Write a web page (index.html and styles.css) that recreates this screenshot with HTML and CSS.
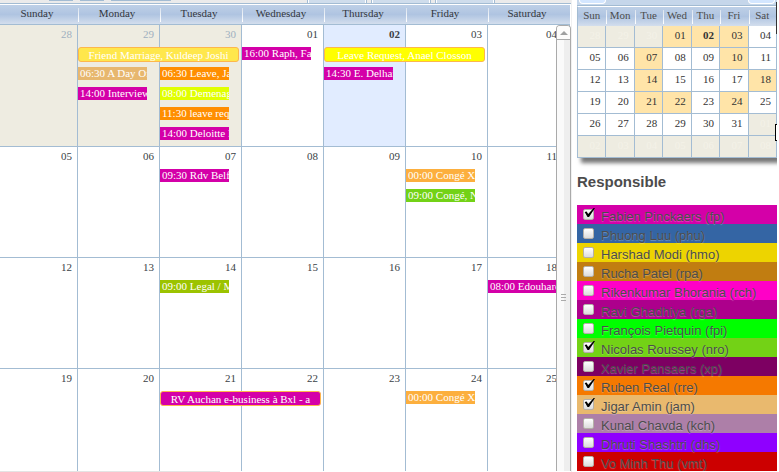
FILE: index.html
```html
<!DOCTYPE html>
<html lang="en">
<head>
<meta charset="utf-8">
<title>Calendar</title>
<link rel="stylesheet" href="styles.css">
</head>
<body>
<main class="calendar">
  <div class="toolbar">
    <span class="tool tool-first"></span><span class="tool"></span><span class="tool tool-wide"></span>
    <span class="tab tab-first"></span><span class="tab"></span><span class="tab"></span>
  </div>
  <div class="weekdays">
    <div>Sunday</div><div>Monday</div><div>Tuesday</div><div>Wednesday</div><div>Thursday</div><div>Friday</div><div>Saturday</div>
  </div>
  <div class="month">
    <section class="week week-first">
      <div class="day c1 other">28</div><div class="day c2 other">29</div><div class="day c3 other">30</div><div class="day c4">01</div><div class="day c5 today">02</div><div class="day c6">03</div><div class="day c7">04</div>
      <div class="allday c2 r1 lemon">Friend Marriage, Kuldeep Joshi</div>
      <div class="event c2 r2 tan">06:30 A Day Off</div>
      <div class="event c2 r3 magenta">14:00 Interview</div>
      <div class="event c3 r2 orange">06:30 Leave, Jay</div>
      <div class="event c3 r3 lime">08:00 Demenagement</div>
      <div class="event c3 r4 orange">11:30 leave request</div>
      <div class="event c3 r5 magenta">14:00 Deloitte B</div>
      <div class="event c4 r1 magenta">16:00 Raph, Fabien</div>
      <div class="allday c5 r1 yellow">Leave Request, Anael Closson</div>
      <div class="event c5 r2 magenta">14:30 E. Delhaize</div>
    </section>
    <section class="week">
      <div class="day c1">05</div><div class="day c2">06</div><div class="day c3">07</div><div class="day c4">08</div><div class="day c5">09</div><div class="day c6">10</div><div class="day c7">11</div>
      <div class="event c3 r1 magenta">09:30 Rdv Belfius</div>
      <div class="event c6 r1 apricot">00:00 Congé XAP</div>
      <div class="event c6 r2 green">09:00 Congé, Nicolas</div>
    </section>
    <section class="week">
      <div class="day c1">12</div><div class="day c2">13</div><div class="day c3">14</div><div class="day c4">15</div><div class="day c5">16</div><div class="day c6">17</div><div class="day c7">18</div>
      <div class="event c3 r1 olive">09:00 Legal / Meeting</div>
      <div class="event c7 r1 magenta">08:00 Edouhard</div>
    </section>
    <section class="week">
      <div class="day c1">19</div><div class="day c2">20</div><div class="day c3">21</div><div class="day c4">22</div><div class="day c5">23</div><div class="day c6">24</div><div class="day c7">25</div>
      <div class="allday c3 r1 magenta">RV Auchan e-business à Bxl - a</div>
      <div class="event c6 r1 apricot">00:00 Congé XAP</div>
    </section>
    <div class="scrollbar">
      <button class="scroll-up" aria-label="Scroll up"><svg width="8" height="4" viewBox="0 0 8 4"><path d="M0 4L4 0L8 4Z" fill="#a0a0a0"/></svg></button>
      <div class="track"><span class="grip"></span></div>
    </div>
  </div>
  <div class="status"></div>
</main>
<aside class="side">
  <div class="mini-box">
    <div class="mini-nav"><button aria-label="Previous month"></button><button aria-label="Next month"></button></div>
    <table class="mini">
      <thead><tr><th>Sun</th><th>Mon</th><th>Tue</th><th>Wed</th><th>Thu</th><th>Fri</th><th>Sat</th></tr></thead>
      <tbody>
        <tr><td class="out">28</td><td class="out">29</td><td class="out">30</td><td class="busy">01</td><td class="busy now">02</td><td class="busy">03</td><td>04</td></tr>
        <tr><td>05</td><td>06</td><td class="busy">07</td><td>08</td><td>09</td><td class="busy">10</td><td>11</td></tr>
        <tr><td>12</td><td>13</td><td class="busy">14</td><td>15</td><td>16</td><td>17</td><td class="busy">18</td></tr>
        <tr><td>19</td><td>20</td><td class="busy">21</td><td class="busy">22</td><td>23</td><td class="busy">24</td><td>25</td></tr>
        <tr><td>26</td><td>27</td><td>28</td><td>29</td><td>30</td><td>31</td><td class="out">01</td></tr>
        <tr><td class="out">02</td><td class="out">03</td><td class="out">04</td><td class="out">05</td><td class="out">06</td><td class="out">07</td><td class="out">08</td></tr>
      </tbody>
    </table>
    <span class="edge"></span><span class="bracket"></span>
  </div>
  <h2>Responsible</h2>
  <div class="people">
    <label class="p-fp"><input type="checkbox" checked><span>Fabien Pinckaers (fp)</span></label>
    <label class="p-phu"><input type="checkbox"><span>Phuong Luu (phu)</span></label>
    <label class="p-hmo"><input type="checkbox"><span>Harshad Modi (hmo)</span></label>
    <label class="p-rpa"><input type="checkbox"><span>Rucha Patel (rpa)</span></label>
    <label class="p-rch"><input type="checkbox"><span>Rikenkumar Bhorania (rch)</span></label>
    <label class="p-rga"><input type="checkbox"><span>Ravi Ghadhiya (rga)</span></label>
    <label class="p-fpi"><input type="checkbox"><span>François Pietquin (fpi)</span></label>
    <label class="p-nro"><input type="checkbox" checked><span>Nicolas Roussey (nro)</span></label>
    <label class="p-xp"><input type="checkbox"><span>Xavier Pansaers (xp)</span></label>
    <label class="p-rre"><input type="checkbox" checked><span>Ruben Real (rre)</span></label>
    <label class="p-jam"><input type="checkbox" checked><span>Jigar Amin (jam)</span></label>
    <label class="p-kch"><input type="checkbox"><span>Kunal Chavda (kch)</span></label>
    <label class="p-dhs"><input type="checkbox"><span>Dhruti Shashtri (dhs)</span></label>
    <label class="p-vmt"><input type="checkbox"><span>Vo Minh Thu (vmt)</span></label>
  </div>
</aside>
</body>
</html>
```
FILE: styles.css
```css
* { box-sizing: border-box; }
body {
  margin: 0;
  padding-right: 2px;
  height: 100vh;
  display: flex;
  overflow: hidden;
  background: #fff;
  color: #4c4c4c;
  font: 11px/13px "Liberation Serif", serif;
}
.calendar {
  flex: 1;
  min-width: 0;
  display: flex;
  flex-direction: column;
  border-right: 1px solid #f0f0f0;
}
.toolbar {
  flex: none;
  display: flex;
  height: 4px;
  background: #ebebeb;
  border-bottom: 1px solid #a3bcd3;
}
.tool { width: 24px; height: 1px; margin-right: 7px; background: #a3bcd3; }
.tool-first { margin-left: 49px; }
.tool-wide { width: 60px; }
.tab {
  width: 60px;
  margin-right: 4px;
  background: #cfddec;
  border: solid #a3bcd3;
  border-width: 0 1px;
  box-shadow: inset 1px 0 #fff, inset -1px 0 #fff;
}
.tab-first { margin-left: 129px; }
.weekdays {
  flex: none;
  display: grid;
  grid-template-columns: 78fr repeat(6, 82fr);
  margin-right: 1px;
  border-top: 1px solid #fff;
  border-bottom: 1px solid #a3bcd3;
  background: linear-gradient(#bed0e7, #afc4e1 50%, #d3deed);
  text-align: center;
  color: #33373d;
}
.weekdays div { height: 19px; padding-right: 4px; line-height: 17px; }
.weekdays div + div { background: linear-gradient(#dbe4ef, #fff) 0 3px / 1px 14px no-repeat; }
.month { flex: 1; min-height: 0; position: relative; overflow: hidden; }
.week {
  display: grid;
  grid-template-columns: 78fr repeat(6, 82fr);
  grid-template-rows: 22px repeat(4, 20px) 1fr;
  height: 111px;
  margin-right: 1px;
  border-bottom: 1px solid #a3bcd3;
}
.week-first { height: 122px; }
.day {
  grid-row: 1 / -1;
  padding: 3px 5px 0 0;
  border-right: 1px solid #a3bcd3;
  text-align: right;
  color: #3a3f46;
}
.day.c7 { padding-right: 12px; }
.day.other { background: #eeece1; color: #9fb0c0; }
.today { background: #e1ecff; font-weight: bold; }
.event, .allday {
  align-self: start;
  overflow: hidden;
  white-space: nowrap;
  color: #fff;
}
.event { height: 13px; margin-right: 13px; padding-left: 2px; line-height: 13px; }
.allday {
  height: 15px;
  margin-right: 3px;
  border: 1px solid #fdb74c;
  border-radius: 3px;
  line-height: 14px;
  text-align: center;
}
.c1 { grid-column: 1; } .c2 { grid-column: 2; } .c3 { grid-column: 3; } .c4 { grid-column: 4; }
.c5 { grid-column: 5; } .c6 { grid-column: 6; } .c7 { grid-column: 7; }
.allday { grid-column-end: span 2; }
.r1 { grid-row: 2; } .r2 { grid-row: 3; } .r3 { grid-row: 4; } .r4 { grid-row: 5; } .r5 { grid-row: 6; }
.lemon { background: #ffe74c; }
.yellow { background: #ff0; }
.tan { background: #e7b76e; }
.magenta { background: #d400a8; }
.orange { background: #ff8e00; }
.lime { background: #e1ff00; }
.apricot { background: #fcaf3e; }
.green { background: #73d216; }
.olive { background: #9cc300; }
.scrollbar {
  position: absolute;
  inset: 0 0 0 auto;
  width: 15px;
  display: flex;
  flex-direction: column;
  border: solid #aaa;
  border-width: 1px 1px 0;
  border-radius: 4px 4px 0 0;
  background: linear-gradient(90deg, #fafafa 7px, #eee 7px);
}
.scroll-up {
  height: 14px;
  padding: 0;
  display: flex;
  align-items: center;
  justify-content: center;
  border: 0;
  border-bottom: 1px solid #aaa;
  border-radius: 3px 3px 0 0;
  background: #fdfcfb;
}
.track { flex: 1; display: flex; flex-direction: column; align-items: center; }
.track::before { content: ""; flex: 254; }
.track::after { content: ""; flex: 170; }
.grip {
  width: 5px;
  height: 7px;
  background: repeating-linear-gradient(#aaa 0 1px, transparent 1px 3px);
}
.status { flex: none; width: 220px; height: 1px; background: #e4e4e4; }

.side {
  flex: none;
  width: 205px;
  height: calc(100vh - 1px);
  padding-left: 5px;
  overflow: hidden;
  font: 13px/19px "Liberation Sans", sans-serif;
}
.mini-box { position: relative; }
.mini-nav {
  display: flex;
  justify-content: space-between;
  height: 6px;
  padding: 0 2px 1px;
  background: #c5d6ea;
  border-bottom: 1px solid #a3bcd3;
}
.mini-nav button {
  width: 27px;
  padding: 0;
  background: #d3e6ff;
  border: 1px solid #fff;
  border-top: 0;
  border-radius: 0 0 4px 4px;
}
.mini {
  width: 100%;
  table-layout: fixed;
  border-collapse: separate;
  border-spacing: 0;
  border-top: 1px solid #fff;
  border-left: 1px solid #a3bcd3;
  box-shadow: 4px 5px 4px #777;
  font: 11px/13px "Liberation Serif", serif;
}
.mini thead tr { background: linear-gradient(#bed0e7, #afc4e1 50%, #d3deed); }
.mini th {
  height: 19px;
  padding: 0 1px 2px 0;
  font-weight: normal;
  color: #4c4c4c;
}
.mini th + th { background: linear-gradient(#dbe4ef, #fff) 0 3px / 1px 14px no-repeat; }
.mini td {
  height: 22px;
  padding: 0 5px 2px 0;
  border: solid #a3bcd3;
  border-width: 0 1px 1px 0;
  background: #fff;
  color: #333;
  text-align: right;
}
.mini .busy { background: #ffe4a8; }
.mini .now { font-weight: bold; }
.mini .out { background: #eeece1; color: #f4f2e8; }
.edge, .bracket { position: absolute; right: 0; }
.edge { top: 2px; width: 1px; height: 32px; background: #333; }
.bracket { top: 124px; width: 2px; height: 17px; border: solid #000; border-width: 1px 0 1px 1px; background: #fff; }
h2 { margin: 14px 0; font-size: 15px; line-height: 19px; color: #4c4c4c; }
.people label {
  display: flex;
  height: 19px;
  padding-left: 6px;
  gap: 7px;
}
.people span { padding-top: 2px; text-shadow: 0 1px 1px rgba(255, 255, 255, .3); }
.people input {
  appearance: none;
  position: relative;
  width: 11px;
  height: 11px;
  margin: 4px 0 0;
  border: 1px solid #b5b0a8;
  border-radius: 2px;
  background: linear-gradient(#fff, #dcdcdc);
}
.people input:checked::after {
  content: "";
  position: absolute;
  left: 0;
  top: -2px;
  width: 11px;
  height: 9px;
  background: #000;
  clip-path: polygon(6% 45%, 24% 40%, 38% 66%, 88% 0, 100% 0, 46% 100%, 32% 100%);
}
.p-fp { background: #d400a8; }
.p-phu { background: #3465a4; }
.p-hmo { background: #edd400; }
.p-rpa { background: #c17d11; }
.p-rch { background: #ff00c7; }
.p-rga { background: #ad008c; }
.p-fpi { background: #0f0; }
.p-nro { background: #73d216; }
.p-xp { background: #7d0062; }
.p-rre { background: #f57900; }
.p-jam { background: #e9b96e; }
.p-kch { background: #ad7fa8; }
.p-dhs { background: #8f00ff; }
.p-vmt { background: #c00; }
```
